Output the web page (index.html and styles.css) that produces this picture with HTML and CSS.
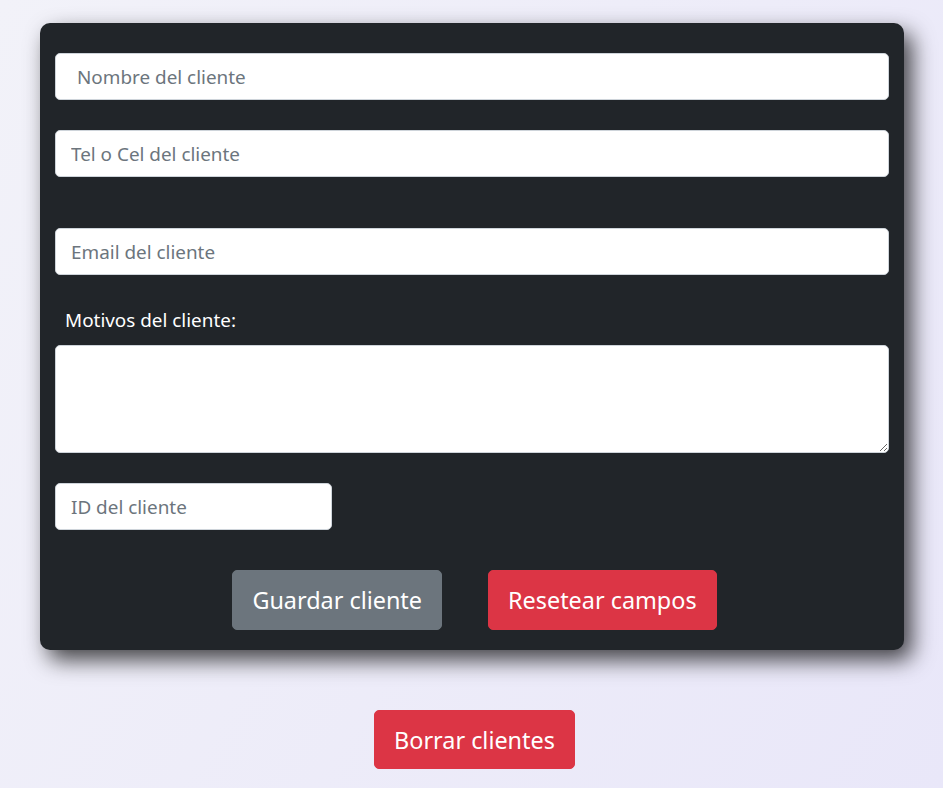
FILE: index.html
```html
<!DOCTYPE html>
<html lang="es">
<head>
<meta charset="utf-8">
<title>Clientes</title>
<link rel="stylesheet" href="styles.css">
</head>
<body>
<main class="page">
  <form class="card">
    <input class="field field-first" type="text" placeholder="Nombre del cliente">
    <input class="field field-tel" type="text" placeholder="Tel o Cel del cliente">
    <input class="field field-email" type="email" placeholder="Email del cliente">
    <label class="label" for="motivos">Motivos del cliente:</label>
    <textarea id="motivos" class="field area"></textarea>
    <input class="field field-id" type="text" placeholder="ID del cliente">
    <div class="actions">
      <button type="button" class="btn btn-gray">Guardar cliente</button>
      <button type="button" class="btn btn-red">Resetear campos</button>
    </div>
  </form>
  <div class="bottom">
    <button type="button" class="btn btn-red btn-borrar">Borrar clientes</button>
  </div>
</main>
</body>
</html>
```

FILE: styles.css
```css
* { box-sizing: border-box; }
html, body { margin: 0; height: 100%; }
body {
  background: linear-gradient(120deg, #f2f2f9 0%, #e9e7f9 100%);
  font-family: "Noto Sans", "Open Sans", sans-serif;
}
.page {
  padding: 23px 39px 0 40px;
}
.card {
  background: #212529;
  border-radius: 10px;
  padding: 30px 15px 20px;
  display: flex;
  flex-direction: column;
  box-shadow: 8px 10px 22px rgba(0, 0, 0, 0.72);
}
.field {
  display: block;
  width: 100%;
  height: 47px;
  border: 1px solid #ced4da;
  border-radius: 5px;
  background: #fff;
  font-family: inherit;
  font-size: 18.9px;
  color: #212529;
  padding: 0 15px;
  margin: 0;
}
.field::placeholder { color: #6c757d; }
.field-first { padding-left: 21px; }
.field-tel { margin-top: 30px; }
.field-email { margin-top: 51px; }
.label {
  color: #fff;
  font-size: 18.9px;
  line-height: 24px;
  margin: 33px 0 0 10px;
}
.area {
  height: 108px;
  margin-top: 13px;
  resize: vertical;
  padding: 8px 15px;
}
.field-id {
  margin-top: 30px;
  width: 277px;
}
.actions {
  display: flex;
  justify-content: center;
  gap: 46px;
  margin-top: 40px;
  padding-left: 5px;
}
.btn {
  font-family: inherit;
  font-size: 23.4px;
  height: 60px;
  padding: 0 19px;
  border: 1px solid transparent;
  border-radius: 5px;
  color: #fff;
  cursor: pointer;
}
.btn-gray { background: #6c757d; border-color: #6c757d; }
.btn-red { background: #dc3545; border-color: #dc3545; }
.bottom {
  display: flex;
  justify-content: center;
  margin-top: 60px;
  padding-left: 5px;
}
.btn-borrar { height: 59px; }
```
